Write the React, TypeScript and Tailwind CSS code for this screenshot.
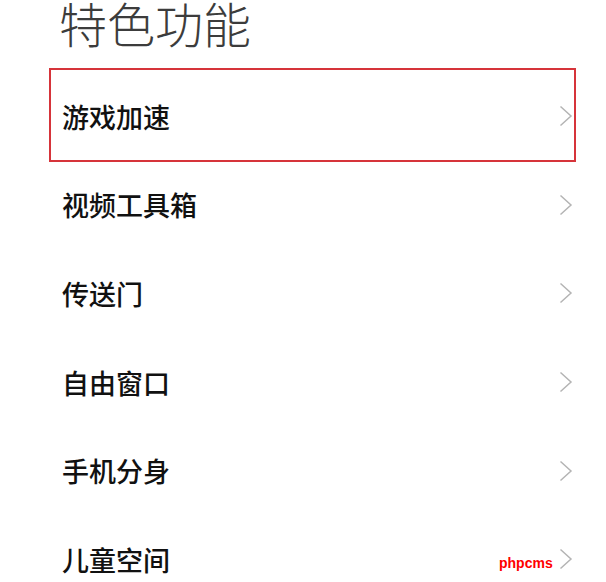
import React from "react";

const items = ["游戏加速", "视频工具箱", "传送门", "自由窗口", "手机分身", "儿童空间"];

function Chevron() {
  return (
    <svg width="14" height="22" viewBox="0 0 14 22" fill="none" className="shrink-0">
      <path d="M1.5 1.5 L12 11 L1.5 20.5" stroke="#b4b4b4" strokeWidth="1.5" strokeLinejoin="miter" />
    </svg>
  );
}

export default function App() {
  return (
    <div
      className="relative w-[606px] h-[582px] overflow-hidden bg-white"
      style={{ fontFamily: '"Noto Sans CJK SC", "Noto Sans", sans-serif' }}
    >
      <div className="pl-[59px] -mt-[2px] text-[48px] leading-none font-light text-[#3c3c3c]">
        特色功能
      </div>
      <div className="mt-[26px] pl-[62px] pr-[33px] flex flex-col">
        {items.map((t) => (
          <div key={t} className="h-[88.6px] flex items-center justify-between">
            <span className="text-[27px] leading-none font-medium text-[#111]">{t}</span>
            <Chevron />
          </div>
        ))}
      </div>
      <div className="absolute left-[49px] top-[68px] w-[527px] h-[94px] border-2 border-[#d6343a]" />
      <div
        className="absolute left-[499px] top-[556px] text-[14px] leading-none font-bold text-[#ff0000]"
        style={{ fontFamily: '"Liberation Sans", sans-serif' }}
      >
        phpcms
      </div>
    </div>
  );
}
